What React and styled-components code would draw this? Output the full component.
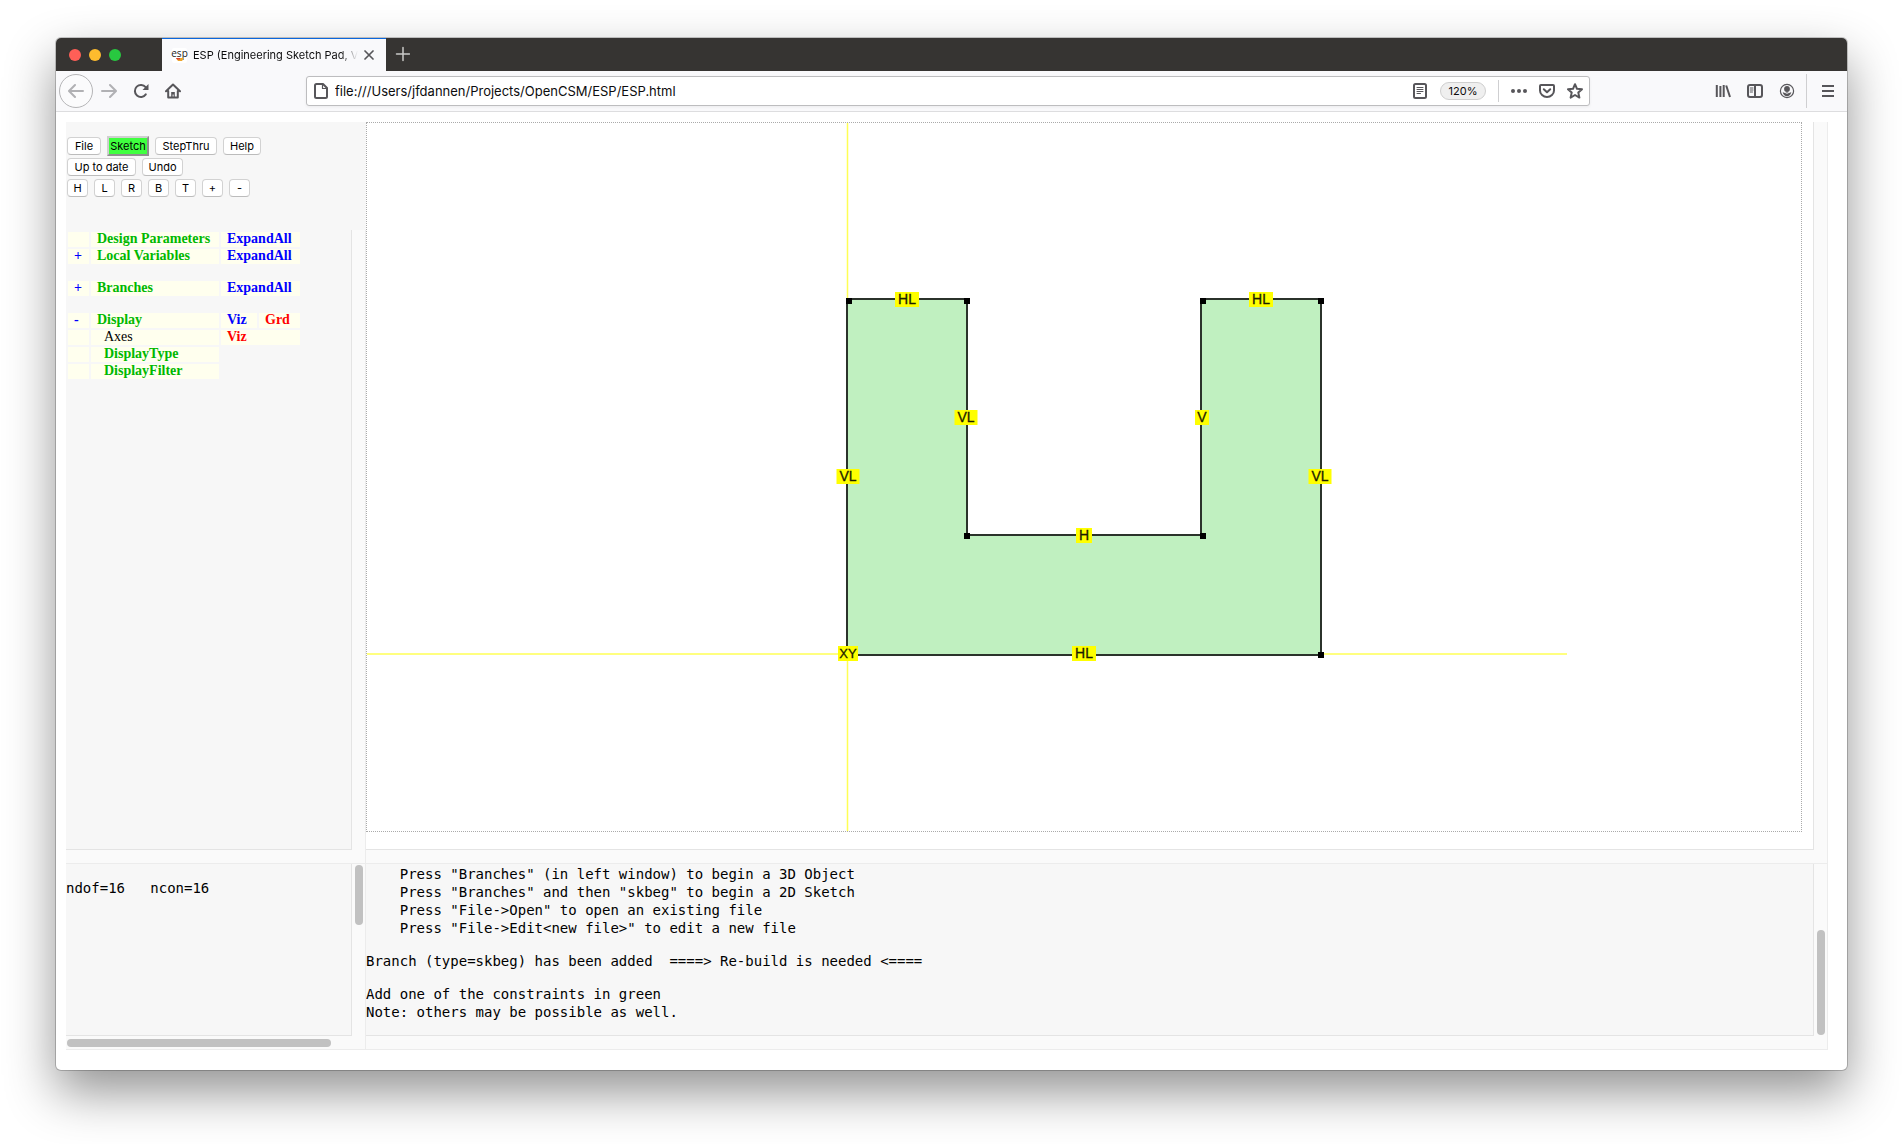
import React from "react";
import styled, { createGlobalStyle, css } from "styled-components";

const ui = `Inter, "Liberation Sans", sans-serif`;
const serif = `"Liberation Serif", "Times New Roman", serif`;
const mono = `"DejaVu Sans Mono", monospace`;

const Global = createGlobalStyle`
  * { box-sizing: border-box; }
  body { margin: 0; background: #fff; font-family: ${ui}; color: #0c0c0d; }
  button { font: inherit; color: inherit; }
`;

/* ---------- window chrome ---------- */

const Desktop = styled.div`
  display: flex;
  height: 100vh;
  padding: 38px 56px 74px;
  overflow: hidden;
`;

const Window = styled.div`
  flex: 1;
  min-width: 0;
  display: flex;
  flex-direction: column;
  border-radius: 5px;
  background: #fff;
  box-shadow: 0 0 0 1px rgba(0, 0, 0, 0.2), 0 22px 50px rgba(0, 0, 0, 0.43);
`;

const TitleBar = styled.header`
  display: flex;
  height: 33px;
  border-radius: 5px 5px 0 0;
  background: #363432;
`;

const Lights = styled.div`
  display: flex;
  align-items: center;
  gap: 8px;
  width: 106px;
  padding-left: 13px;
`;

const Light = styled.button`
  width: 12px;
  height: 12px;
  padding: 0;
  border: 0;
  border-radius: 50%;
  background: ${(p) => p.$color};
`;

const Tab = styled.div`
  display: flex;
  align-items: center;
  gap: 6px;
  width: 224px;
  padding: 0 9px 0 10px;
  border-top: 1px solid #0a66dc;
  background: #f9f9fb;
`;

const Favicon = styled.span`
  display: flex;
  flex: none;
  flex-direction: column;
  align-items: center;
  width: 15px;
  height: 15px;
  border-radius: 2px;
  background: #fff;
  font: 10px/10px "Open Sans", sans-serif;
  color: #222;
`;

const TabTitle = styled.span`
  flex: 1;
  white-space: nowrap;
  font-size: 11px;
  line-height: 16px;
  mask-image: linear-gradient(to left, transparent, #000 18px);
`;

const IconButton = styled.button`
  display: flex;
  flex: none;
  align-items: center;
  justify-content: center;
  width: ${(p) => p.$w || 32}px;
  height: ${(p) => p.$h || 32}px;
  padding: 0;
  border: 0;
  background: none;
  color: ${(p) => p.$color || "#57565a"};
  ${(p) =>
    p.$round &&
    css`
      border: 1px solid #b5b5b7;
      border-radius: 50%;
      background: #fbfbfc;
    `}
`;

const Toolbar = styled.nav`
  display: flex;
  align-items: center;
  height: 41px;
  padding: 0 3px;
  border-bottom: 1px solid #dddddf;
  background: #f9f9fb;
`;

const Spacer = styled.div`
  flex: 1;
`;

const UrlBar = styled.div`
  display: flex;
  flex: 11;
  align-items: center;
  height: 30px;
  margin: 0 1px;
  padding: 0 0 0 6px;
  border: 1px solid #bdbdbf;
  border-radius: 3px;
  background: #fff;
  box-shadow: 0 1px 3px rgba(0, 0, 0, 0.06);
  color: #57565a;
`;

const UrlInput = styled.input`
  flex: 1;
  min-width: 0;
  padding: 0 6px;
  border: 0;
  outline: 0;
  background: none;
  font: 13px/20px ${ui};
  color: #0c0c0d;
`;

const Zoom = styled.button`
  width: 46px;
  height: 18px;
  margin: 0 12px 0 6px;
  padding: 0;
  border: 1px solid #cfcfcf;
  border-radius: 9px;
  background: #efefef;
  font-size: 11px;
  line-height: 14px;
  color: #0c0c0d;
`;

const Divider = styled.span`
  width: 1px;
  height: ${(p) => p.$h}px;
  margin: 0 ${(p) => p.$right}px 0 ${(p) => p.$left}px;
  background: #cfcfd1;
`;

/* ---------- page frames ---------- */

const Page = styled.main`
  flex: 1;
  min-height: 0;
  display: grid;
  grid-template-columns: 300px 1fr;
  grid-template-rows: 4fr 1fr;
  padding: 10px 19px 20px 10px;
`;

const LeftTop = styled.div`
  display: flex;
  flex-direction: column;
  min-height: 0;
  background: #f7f7f7;
`;

const Controls = styled.div`
  display: flex;
  flex-direction: column;
  gap: 1px;
  height: 108px;
  padding: 14px 1px;
`;

const ButtonRow = styled.div`
  display: flex;
  align-items: center;
  gap: 6px;
  height: 20px;
`;

const PageButton = styled.button`
  width: ${(p) => p.$w}px;
  height: 18px;
  padding: 0;
  border: 1px solid #d2d2d2;
  border-bottom-color: #bcbcbc;
  border-radius: 4px;
  background: #fff;
  font-size: 11px;
  line-height: 14px;
  color: #000;
  ${(p) =>
    p.$active &&
    css`
      height: 20px;
      border: 2px solid;
      border-color: #cfcfcf #8f8f8f #8f8f8f #cfcfcf;
      border-radius: 0;
      background: #3fff3f;
    `}
`;

const Frame = styled.section`
  flex: 1;
  min-width: 0;
  min-height: 0;
  display: grid;
  grid-template-columns: minmax(0, 1fr) 13px;
  grid-template-rows: minmax(0, 1fr) 13px;
  background: #fafafa;
  border-bottom: 1px solid #ececec;
  border-right: 1px solid #ececec;
`;

const Pane = styled.div`
  overflow: hidden;
  border-right: 1px solid #e4e4e4;
  border-bottom: 1px solid #e4e4e4;
  background: ${(p) => p.$bg || "#f7f7f7"};
`;

const CanvasPane = styled(Pane)`
  padding: 0 11px 17px 0;
`;

const LogPane = styled(Pane)`
  display: flex;
  flex-direction: column;
  justify-content: flex-end;
  gap: 15px;
  padding-bottom: 14px;
`;

const StatusPane = styled(Pane)`
  padding-top: 15px;
`;

const Mono = styled.pre`
  margin: 0;
  font: 14px/18px ${mono};
  color: #000;
`;

const Track = styled.div`
  display: flex;
  flex-direction: ${(p) => (p.$vertical ? "column" : "row")};
  justify-content: ${(p) => (p.$end ? "flex-end" : "flex-start")};
  align-items: center;
  padding: 1px;
`;

const Thumb = styled.div`
  border-radius: 4px;
  background: #c1c1c1;
  width: ${(p) => (p.$vertical ? "8px" : p.$size)};
  height: ${(p) => (p.$vertical ? p.$size : "8px")};
`;

/* ---------- tree ---------- */

const Tree = styled.table`
  table-layout: fixed;
  width: 236px;
  border-collapse: separate;
  border-spacing: 2px;
  font: 14px/14px ${serif};
`;

const Cell = styled.td`
  height: 15px;
  padding: 0 0 1px ${(p) => (p.$indent ? 13 : 6)}px;
  white-space: nowrap;
  background: #ffffee;
`;

const SpacerCell = styled.td`
  height: 13px;
  padding: 0;
`;

const Action = styled.button`
  display: block;
  padding: 0;
  border: 0;
  background: none;
  font-weight: ${(p) => (p.$color === "#000" ? 400 : 700)};
  color: ${(p) => p.$color};
`;

const Drawing = styled.svg`
  display: block;
  width: 100%;
  height: 100%;
  border: 1px dotted #aaa;
  background: #fff;
  font-family: "Liberation Sans", Arial, sans-serif;
`;

const GREEN = "#00b800";
const BLUE = "#0000ff";
const RED = "#ff0000";

const tree = [
  { name: "Design Parameters", acts: [["ExpandAll", BLUE]] },
  { mark: "+", name: "Local Variables", acts: [["ExpandAll", BLUE]] },
  null,
  { mark: "+", name: "Branches", acts: [["ExpandAll", BLUE]] },
  null,
  { mark: "-", name: "Display", acts: [["Viz", BLUE], ["Grd", RED]] },
  { name: "Axes", child: true, color: "#000", acts: [["Viz", RED]] },
  { name: "DisplayType", child: true, acts: [] },
  { name: "DisplayFilter", child: true, acts: [] },
];

const buttons = [
  [["File", 34], ["Sketch", 42, true], ["StepThru", 62], ["Help", 38]],
  [["Up to date", 69], ["Undo", 41]],
  [["H", 21], ["L", 21], ["R", 21], ["B", 21], ["T", 21], ["+", 21], ["-", 21]],
];

const log = [
  `    Press "Design Parameters" (in left window) to add a Design Parameter
    Press "Branches" (in left window) to begin a 3D Object
    Press "Branches" and then "skbeg" to begin a 2D Sketch
    Press "File->Open" to open an existing file
    Press "File->Edit<new file>" to edit a new file`,
  `Branch (type=skbeg) has been added  ====> Re-build is needed <====`,
  `Add one of the constraints in green
Note: others may be possible as well.`,
];

const points = [
  [480, 176], [600, 176], [600, 412], [834, 412], [834, 176], [954, 176], [954, 532], [480, 532],
];

const vertices = [
  [482, 178], [600, 178], [600, 413], [836, 413], [836, 178], [954, 178], [954, 532],
];

const constraints = [
  ["HL", 540, 176, 24], ["HL", 894, 176, 24], ["VL", 599, 294, 23], ["V", 835, 294, 14],
  ["VL", 481, 353, 23], ["VL", 953, 353, 23], ["H", 717, 412, 16], ["HL", 717, 530, 24],
  ["XY", 481, 530, 20],
];

const Icon = ({ size = 16, children, w = 2 }) => (
  <svg width={size} height={size} viewBox="0 0 16 16" fill="none" stroke="currentColor"
    strokeWidth={w} strokeLinecap="round" strokeLinejoin="round" aria-hidden="true">
    {children}
  </svg>
);

function SketchCanvas() {
  return (
    <Drawing role="img" aria-label="Sketch">
      <path d="M0 531H1200M480.5 0V2000" stroke="#ffff55" strokeWidth="1.5" />
      <polygon points={points.map((p) => p.join(",")).join(" ")} fill="#c0f0c0" stroke="#2b332b" strokeWidth="2" />
      {vertices.map(([x, y]) => (
        <rect key={`${x}-${y}`} x={x - 3} y={y - 3} width="6" height="6" fill="#000" />
      ))}
      {constraints.map(([t, x, y, w]) => (
        <g key={`${x}-${y}`}>
          <rect x={x - w / 2} y={y - 7} width={w} height="15" fill="#ffff00" />
          <text x={x} y={y + 5} fontSize={t === "XY" ? 13 : 14} textAnchor="middle" fill="#1c1c00"
            stroke="#1c1c00" strokeWidth="0.3">{t}</text>
        </g>
      ))}
    </Drawing>
  );
}

function TreeTable() {
  return (
    <Tree>
      <colgroup>
        <col style={{ width: 21 }} />
        <col style={{ width: 128 }} />
        <col style={{ width: 36 }} />
        <col />
      </colgroup>
      <tbody>
        {tree.map((row, i) =>
          row ? (
            <tr key={row.name}>
              <Cell>{row.mark && <Action $color={BLUE}>{row.mark}</Action>}</Cell>
              <Cell $indent={row.child}>
                <Action $color={row.color || GREEN}>{row.name}</Action>
              </Cell>
              {row.acts.map(([label, color]) => (
                <Cell key={label} colSpan={row.acts.length === 1 ? 2 : 1}>
                  <Action $color={color}>{label}</Action>
                </Cell>
              ))}
            </tr>
          ) : (
            <tr key={i}><SpacerCell colSpan={4} /></tr>
          )
        )}
      </tbody>
    </Tree>
  );
}

export default function App() {
  return (
    <Desktop>
      <Global />
      <Window>
        <TitleBar>
          <Lights>
            <Light $color="#ff5f57" aria-label="Close window" />
            <Light $color="#febc2e" aria-label="Minimize window" />
            <Light $color="#28c840" aria-label="Zoom window" />
          </Lights>
          <Tab>
            <Favicon>
              esp
              <svg width="8" height="3" viewBox="0 0 8 3" aria-hidden="true">
                <path d="M0 0H8L6 3H2Z" fill="#eda52c" />
                <path d="M0 0H4V1.5H1Z" fill="#d63c2c" />
              </svg>
            </Favicon>
            <TabTitle>ESP (Engineering Sketch Pad, V</TabTitle>
            <IconButton $w={16} $h={16} aria-label="Close tab">
              <Icon size={16} w={1.7}><path d="M1 4L9 12M9 4L1 12" /></Icon>
            </IconButton>
          </Tab>
          <IconButton $color="#c9c9c8" aria-label="New tab">
            <Icon w={1.5}><path d="M9 1.5V14.5M2.5 8H15.5" /></Icon>
          </IconButton>
        </TitleBar>

        <Toolbar>
          <IconButton $w={34} $h={34} $round $color="#b1b1b4" aria-label="Back">
            <Icon><path d="M15 8H1.5M7 2L1 8L7 14" /></Icon>
          </IconButton>
          <IconButton $color="#b1b1b4" aria-label="Forward">
            <Icon><path d="M1 8H14.5M9 2L15 8L9 14" /></Icon>
          </IconButton>
          <IconButton aria-label="Reload">
            <Icon>
              <path d="M12.8 11.4A6 6 0 1 1 12.6 4.2" />
              <path d="M15.5 1V7H9.5Z" fill="currentColor" stroke="none" />
            </Icon>
          </IconButton>
          <IconButton aria-label="Home">
            <Icon>
              <path d="M1 8.3L8 1.5L15 8.3M3.2 8V14.5H12.8V8" />
              <path d="M6.2 14V9H9.8V14H8.6V11.5H7.6V14Z" fill="currentColor" stroke="none" />
            </Icon>
          </IconButton>
          <Spacer />
          <UrlBar>
            <Icon>
              <path d="M3.5 1H10L14 5V13.5Q14 15 12.5 15H3.5Q2 15 2 13.5V2.5Q2 1 3.5 1Z" />
              <path d="M9.5 1.5V5.5H13.5" strokeWidth="1.2" />
            </Icon>
            <UrlInput aria-label="Address" defaultValue="file:///Users/jfdannen/Projects/OpenCSM/ESP/ESP.html" />
            <IconButton $w={28} $h={28} aria-label="Reader view">
              <Icon>
                <rect x="2" y="1" width="12" height="14" rx="1.5" />
                <path d="M5 4.5H11M5 6.5H11M5 8.5H11M5 10.5H8.5" strokeWidth="1" />
              </Icon>
            </IconButton>
            <Zoom>120%</Zoom>
            <Divider $h={22} $left={0} $right={6} />
            <IconButton $w={28} $h={28} aria-label="Page actions">
              <svg width="16" height="16" viewBox="0 0 16 16" fill="currentColor" aria-hidden="true">
                <circle cx="2" cy="8" r="2" /><circle cx="8" cy="8" r="2" /><circle cx="14" cy="8" r="2" />
              </svg>
            </IconButton>
            <IconButton $w={28} $h={28} aria-label="Save to Pocket">
              <Icon>
                <path d="M2 2H14Q15 2 15 3V7.5A7 6.5 0 0 1 1 7.5V3Q1 2 2 2Z" />
                <path d="M4.8 6.3L8 9.3L11.2 6.3" />
              </Icon>
            </IconButton>
            <IconButton $w={28} $h={28} aria-label="Bookmark">
              <Icon><path d="M8 1.2L10 5.8L15 6.2L11.3 9.6L12.4 14.6L8 12L3.6 14.6L4.7 9.6L1 6.2L6 5.8Z" /></Icon>
            </IconButton>
          </UrlBar>
          <Spacer />
          <IconButton aria-label="Library">
            <Icon><path d="M1.8 2V14M5.4 3V14M8.7 2V14M11.2 2.5L15 14" strokeLinecap="butt" /></Icon>
          </IconButton>
          <IconButton aria-label="Sidebar">
            <Icon>
              <rect x="1" y="2" width="14" height="12" rx="2" />
              <path d="M8 2.5V13.5" />
              <path d="M3.2 5H6M3.2 7H6M3.2 9H5.5" strokeWidth="1" />
            </Icon>
          </IconButton>
          <IconButton aria-label="Account">
            <Icon w={1.2}>
              <circle cx="8" cy="8" r="6.6" />
              <circle cx="8" cy="6" r="2.9" fill="currentColor" stroke="none" />
              <path d="M3.6 9.6Q8 8.5 12.4 9.6Q11 13.2 8 13.2Q5 13.2 3.6 9.6Z" fill="currentColor" stroke="none" />
              <path d="M5 9.2Q8 11.6 11 9.2" stroke="#f9f9fb" strokeWidth="1" />
            </Icon>
          </IconButton>
          <Divider $h={34} $left={3} $right={5} />
          <IconButton aria-label="Menu">
            <Icon><path d="M2 3H14M2 8H14M2 13H14" strokeLinecap="butt" /></Icon>
          </IconButton>
        </Toolbar>

        <Page>
          <LeftTop>
            <Controls>
              {buttons.map((row, i) => (
                <ButtonRow key={i}>
                  {row.map(([label, w, active]) => (
                    <PageButton key={label} $w={w} $active={active}>{label}</PageButton>
                  ))}
                </ButtonRow>
              ))}
            </Controls>
            <Frame>
              <Pane><TreeTable /></Pane>
              <Track $vertical />
              <Track />
            </Frame>
          </LeftTop>

          <Frame>
            <CanvasPane $bg="#fff"><SketchCanvas /></CanvasPane>
            <Track $vertical />
            <Track />
          </Frame>

          <Frame>
            <StatusPane><Mono>ndof=16   ncon=16</Mono></StatusPane>
            <Track $vertical><Thumb $vertical $size="35%" /></Track>
            <Track><Thumb $size="93%" /></Track>
          </Frame>

          <Frame>
            <LogPane>
              {log.map((text) => <Mono key={text}>{text}</Mono>)}
            </LogPane>
            <Track $vertical $end><Thumb $vertical $size="62%" /></Track>
            <Track />
          </Frame>
        </Page>
      </Window>
    </Desktop>
  );
}
